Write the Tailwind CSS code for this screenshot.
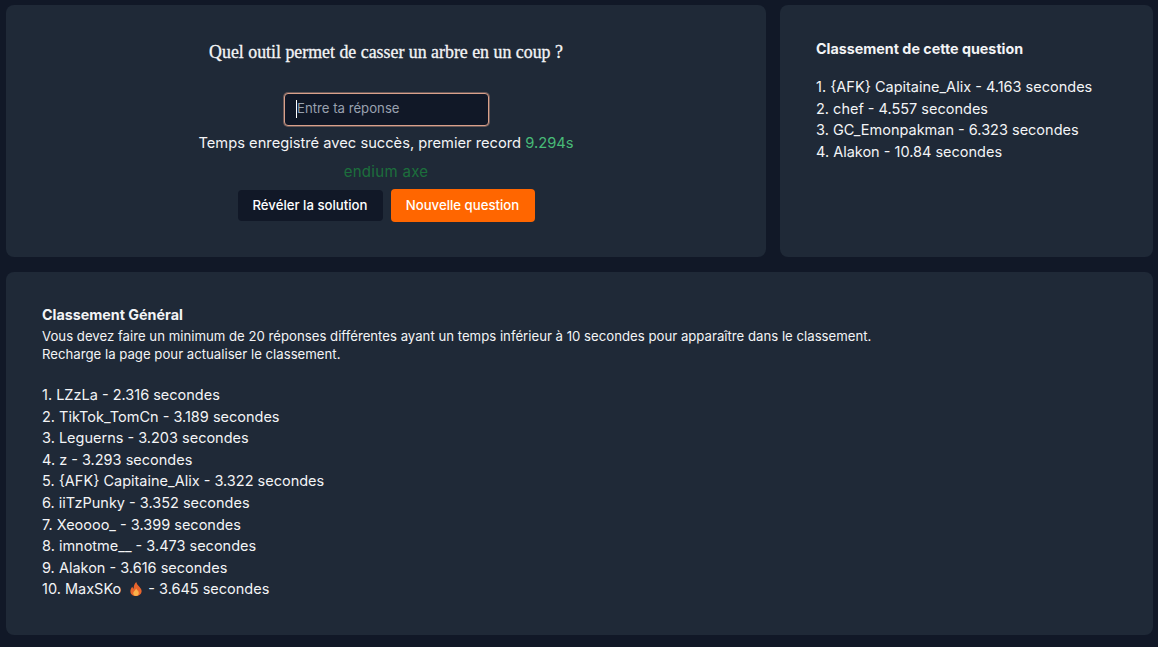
<!DOCTYPE html>
<html lang="fr">
<head>
    <meta charset="UTF-8">
    <meta name="viewport" content="width=device-width, initial-scale=1.0">
    <title>Quiz</title>
    <script src="https://cdn.jsdelivr.net/npm/@tailwindcss/browser@4"></script>
</head>
<body class="bg-[#111827] h-[647px] overflow-hidden text-[#f3f4f6] font-['Inter',sans-serif] text-[14.5px]">
<div class="pl-[6px] pr-[5px] pt-[5px] flex flex-col gap-[15px]">
    <div class="flex gap-[14px] h-[252px]">
        <div class="w-[760px] bg-[#1f2937] rounded-lg flex flex-col items-center">
            <h1 class="mt-[35px] h-[24px] leading-[24px] font-['Liberation_Serif',serif] text-[17.85px] font-normal text-gray-100 [-webkit-text-stroke:0.3px_#f3f4f6]">Quel outil permet de casser un arbre en un coup ?</h1>
            <div class="mt-[29px] w-[205px] h-[33px] bg-[#111827] border border-[#d9a08a] ring-1 ring-[#d9a08a]/40 rounded flex items-center pl-[11px] pb-px text-[13.2px] text-gray-400 ml-[1px]">
                <span class="w-px h-[18px] bg-white -mr-px"></span>
                <span class="pl-px">Entre ta réponse</span>
            </div>
            <p class="mt-[7px] h-[20px] leading-[20px] text-[14.7px]">Temps enregistré avec succès, premier record <span class="text-[#48bb78]">9.294s</span></p>
            <p class="mt-[9px] h-[20px] leading-[20px] text-[#1c6f3c] text-[15px] tracking-[0.3px]">endium axe</p>
            <div class="mt-[7px] flex items-center gap-[8px]">
                <button class="w-[145px] h-[31px] bg-[#111827] rounded text-[13.2px] font-medium text-white">Révéler la solution</button>
                <button class="w-[144px] h-[33px] bg-[#ff6600] rounded text-[13.2px] font-medium text-white">Nouvelle question</button>
            </div>
        </div>
        <div class="w-[373px] bg-[#1f2937] rounded-lg px-[36px] pt-[34px]">
            <h2 class="text-[14.3px] font-bold h-[20px] leading-[20px]">Classement de cette question</h2>
            <ol class="mt-[17px] leading-[21.6px]">
                <li>1. {AFK} Capitaine_Alix - 4.163 secondes</li>
                <li>2. chef - 4.557 secondes</li>
                <li>3. GC_Emonpakman - 6.323 secondes</li>
                <li>4. Alakon - 10.84 secondes</li>
            </ol>
        </div>
    </div>
    <div class="h-[363px] bg-[#1f2937] rounded-lg px-[36px] pt-[33px]">
        <h2 class="text-[14.3px] font-bold h-[20px] leading-[20px]">Classement Général</h2>
        <p class="mt-[2px] text-[13.2px] leading-[18px]">Vous devez faire un minimum de 20 réponses différentes ayant un temps inférieur à 10 secondes pour apparaître dans le classement.</p>
        <p class="text-[13.2px] leading-[18px]">Recharge la page pour actualiser le classement.</p>
        <ol class="mt-[21px] leading-[21.6px]">
            <li>1. LZzLa - 2.316 secondes</li>
            <li>2. TikTok_TomCn - 3.189 secondes</li>
            <li>3. Leguerns - 3.203 secondes</li>
            <li>4. z - 3.293 secondes</li>
            <li>5. {AFK} Capitaine_Alix - 3.322 secondes</li>
            <li>6. iiTzPunky - 3.352 secondes</li>
            <li>7. Xeoooo_ - 3.399 secondes</li>
            <li>8. imnotme__ - 3.473 secondes</li>
            <li>9. Alakon - 3.616 secondes</li>
            <li class="flex items-center">10. MaxSKo
                <svg class="w-[12px] h-[14px] ml-[9px] mr-[6px]" viewBox="0 0 12 14">
                    <path d="M6.3 0C6.8 2.2 8 3.2 9.6 5C11 6.6 11.8 8 11.6 9.8C11.3 12.4 9 14 6 14C2.9 14 0.5 12.2 0.4 9.4C0.3 7.4 1.4 5.8 2.4 4.8C2.6 5.8 3 6.4 3.7 6.8C3.5 4.2 4.5 1.6 6.3 0Z" fill="#e8642c"/>
                    <path d="M6.2 6.4C6.5 7.6 8.8 8.8 8.8 11C8.8 12.8 7.6 14 6 14C4.4 14 3.2 12.8 3.2 11.2C3.2 9.4 5.4 8.2 6.2 6.4Z" fill="#f9b14a"/>
                </svg>
                - 3.645 secondes</li>
        </ol>
    </div>
</div>
</body>
</html>
